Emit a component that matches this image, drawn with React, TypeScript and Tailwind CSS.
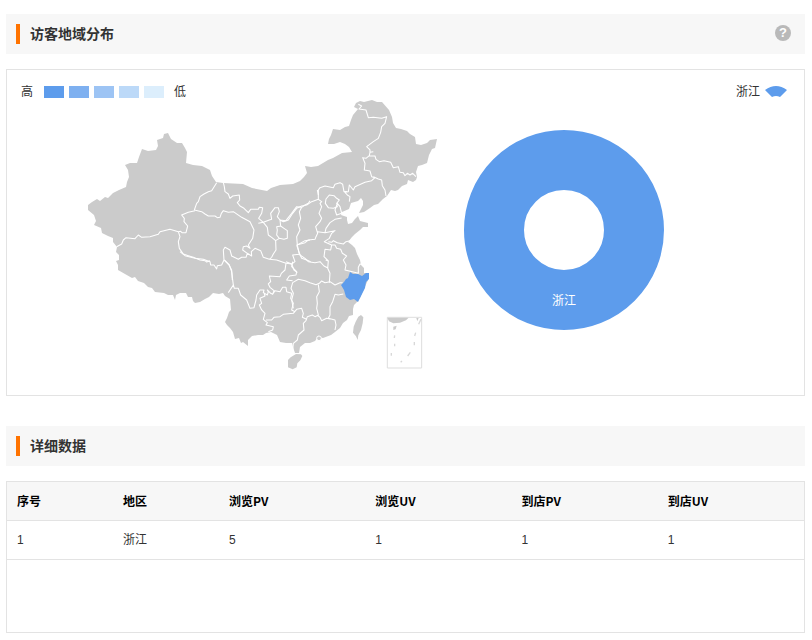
import React from "react";

const mainland =
  "M88 210 88 205 92 202 97 199 100 201 105 197 108 198 113 193 119 190 126 187 127 182 129 177 128 170 125 165 130 163 137 163 139 157 142 149 148 151 156 150 158 146 157 140 163 138 164 134 168 133 171 139 177 143 182 143 185 148 187 152 186 163 193 165 202 166 210 170 212 176 216 182 223 183 243 184 252 188 267 191 271 188 280 185 293 184 300 181 304 177 307 173 305 166 311 167 318 166 328 160 333 158 342 153 352 152 349 147 345 144 340 142 334 144 328 144 329 139 331 135 333 129 340 130 345 127 349 126 351 120 353 115 358 109 354 107 356 103 360 101 364 102 372 100 377 102 382 102 389 110 392 117 393 123 396 128 401 129 407 131 410 134 415 137 416 144 421 145 427 143 430 140 437 139 435 148 432 149 429 155 427 163 422 165 418 166 416 172 417 177 416 180 413 182 408 180 407 184 402 186 398 190 395 191 391 190 387 196 383 199 378 204 374 205 370 208 364 212 359 213 363 205 363 201 361 198 358 201 351 203 349 209 342 212 341 215 347 217 347 220 348 224 352 223 355 219 358 216 360 221 364 222 368 223 368 227 363 227 360 230 355 234 352 237 348 242 352 245 355 248 357 254 360 260 361 265 364 268 364 273 369 273 368 280 363 291 360 298 357 302 354 305 353 309 353 315 349 316 347 320 343 323 340 328 335 332 331 335 323 338 318 337 315 341 310 343 305 343 300 347 299 353 295 353 293 347 292 343 286 343 280 342 277 335 271 332 266 333 263 335 258 335 252 336 248 340 248 346 243 342 241 343 239 338 235 339 233 332 230 328 227 325 225 322 227 318 229 312 231 310 230 299 225 296 223 293 219 294 213 293 209 297 205 299 200 302 195 303 193 301 192 297 188 297 186 293 180 293 176 295 175 300 173 295 168 295 164 293 155 292 152 288 148 287 144 283 138 281 135 277 132 278 125 274 118 270 118 265 116 261 119 260 119 255 116 252 117 247 113 242 113 238 108 236 102 233 101 228 94 225 96 221 94 215Z";

// Province borders, digitised sheet by sheet at three units to the pixel.
const sheets = [
  {
    at: "translate(80 200) scale(.3333)",
    d: "M110 140 125 132 130 120 138 113 165 116 175 105 185 112 210 110 235 103 240 95 270 88 295 95 302 94 306 98 318 98 323 78 312 65 313 55 305 45 325 37 345 32 M295 95 300 110 295 125 298 145 310 162 325 167 340 172 360 180 375 182 380 186 390 182",
  },
  {
    at: "translate(180 170) scale(.3333)",
    d: "M43 120 50 100 55 95 60 80 72 72 85 65 95 62 110 38 M130 38 133 50 135 65 145 72 150 85 158 78 178 75 179 90 172 98 180 108 192 115 205 128 212 118 235 118 238 112 248 113 245 130 236 145 250 157 M235 160 250 157 268 150 275 148 272 130 285 113 295 113 298 125 292 140 300 150 318 152 323 145 335 130 350 110 365 112 375 105 385 100 390 92 M300 150 302 168 290 170 292 180 290 195 298 205 312 208 322 205 322 182 312 175 302 168 M250 157 262 172 265 195 275 202 287 212 298 205 M287 212 288 240 280 252 275 262 M43 120 65 125 75 132 85 138 105 138 112 143 120 142 124 130 130 122 145 127 160 125 185 142 210 155 222 180 218 205 205 225 210 235 200 228 190 230 188 240 202 250 198 262 185 262 175 268 155 258 150 240 135 232 130 240 132 270 125 285 112 287 110 297 102 285 92 285 90 275 70 268 45 265 15 257 0 245 M202 250 215 258 214 245 225 235 242 242 250 262 268 268 275 262 M268 268 290 270 318 280 335 282 345 275 338 255 358 253 352 225 350 200 360 180 355 165 362 145 358 125 365 112 M352 225 375 212 390 210 M358 250 365 265 380 270 392 275 M132 270 147 285 155 300 157 330",
  },
  {
    at: "translate(180 260) scale(.3333)",
    d: "M133 0 148 15 155 35 160 75 145 98 M160 75 163 85 175 85 182 105 200 120 210 145 222 143 228 120 230 105 240 90 252 90 250 98 262 105 265 95 262 90 272 100 278 103 282 92 270 82 265 72 272 65 268 48 300 50 304 40 315 30 318 10 M318 5 335 12 342 30 352 38 M252 98 255 108 240 115 245 130 238 135 245 150 255 160 250 178 262 188 258 195 280 200 278 210 265 215 M278 103 285 92 300 95 308 82 318 82 320 95 335 100 332 115 340 130 335 150 345 155 M258 180 275 180 282 172 300 170 310 163 340 160 350 148 365 145 370 160 367 172 380 178",
  },
  {
    at: "translate(290 95) scale(.3333)",
    d: "M205 28 215 33 207 42 228 45 235 68 250 67 275 70 290 65 285 85 275 95 272 112 265 130 250 140 230 155 240 165 240 172 250 170 M240 172 238 182 255 183 258 193 268 200 282 197 302 202 310 218 325 215 330 232 340 233 345 242 352 235 360 240 368 235 378 245 M238 182 228 190 218 188 225 205 223 225 240 228 245 245 255 248 M250 245 265 252 275 255 277 272 285 285 288 303 M255 248 245 257 225 262 195 275 190 285 178 270 175 290 165 292 172 300 180 305 178 320 M172 290 162 290 158 268 150 263 135 268 130 278 105 273 90 278 85 285 85 300 M108 312 118 300 132 302 140 310 148 315 140 325 142 335 130 340 115 338 106 325Z M142 325 150 335 155 355 140 360 135 345Z",
  },
  {
    at: "translate(280 190) scale(.3333)",
    d: "M0 90 10 95 25 90 38 70 50 55 65 48 80 45 95 35 115 28 M50 165 60 195 75 205 85 215 105 218 120 215 132 228 145 235 M50 165 75 158 85 150 105 148 108 140 113 130 107 110 120 95 125 85 117 70 125 50 120 40 125 35 115 28 115 15 112 0 M113 125 135 128 138 115 150 98 165 88 185 84 M135 128 165 122 155 130 148 145 133 155 155 165 M145 155 155 157 160 152 172 158 190 162 198 155 210 152 M155 165 152 180 135 178 132 200 145 213 143 235 150 250 148 278 M155 165 165 165 170 175 182 178 187 190 200 198 190 210 198 225 195 240 220 246 235 250 235 232 240 222 252 225 M145 213 137 210",
  },
  {
    at: "translate(280 260) scale(.3333)",
    d: "M38 62 20 60 28 48 48 45 50 35 35 20 38 5 M38 68 55 58 75 62 90 68 108 74 118 70 125 63 135 68 150 65 165 75 180 68 188 68 M38 68 33 85 40 100 35 120 40 145 M115 74 118 95 110 110 112 130 110 145 115 165 105 170 97 165 82 170 78 182 70 190 72 210 55 225 52 240 40 250 38 270 M190 102 175 105 165 103 158 125 150 140 150 165 145 175 165 180 168 195 165 210 M112 165 120 172 125 182 140 175 150 177",
  },
];

function ChinaMap() {
  return (
    <svg
      className="h-[280px] w-[352px] shrink-0 overflow-visible"
      viewBox="87 100 352 280"
      role="img"
      aria-label="访客地域分布地图"
    >
      <path d={mainland} fill="#cbcbcb" />
      {sheets.map((s) => (
        <path
          key={s.at}
          d={s.d}
          transform={s.at}
          fill="none"
          stroke="#fff"
          strokeWidth="3.2"
          strokeLinejoin="round"
        />
      ))}
      <path
        d="M350 272 353 274 358 274 362 276 366 273 369 273 369 279 366 282 365 288 363 292 360 298 358 302 354 299 350 300 346 297 344 290 341 285 344 282 346 279 348 278Z"
        fill="#5d9cec"
      />
      <g transform="translate(280 260) scale(.3333)" fill="#cbcbcb">
        <path d="M235 170 243 165 250 172 248 190 243 210 235 226 233 240 228 229 219 218 221 200 227 185Z" />
        <path d="M32 292 48 282 63 283 67 288 61 301 52 310 50 322 38 328 24 322 24 300Z" />
        <circle cx="117" cy="235" r="7" stroke="#fff" strokeWidth="3" />
        <path d="M322 172H425V324H322Z" fill="none" stroke="#dedede" strokeWidth="3" />
        <path d="M322 173H386L378 181 360 188 340 190 327 184Z" />
        <path d="M409 174H416L412 184Z" />
        <path d="M340 200 350 197 347 208 340 210Z" />
        <path
          d="M423 178 416 193M407 218 404 228M403 246V256M391 277 383 288M366 303 362 307M334 279V287M344 251V259M344 226 343 234"
          fill="none"
          stroke="#d8d8d8"
          strokeWidth="4"
        />
      </g>
    </svg>
  );
}

function Donut() {
  return (
    <svg className="mt-[30px] size-[200px] shrink-0" viewBox="0 0 200 200" role="img" aria-label="浙江">
      <circle cx="100" cy="100" r="70" fill="none" stroke="#5d9cec" strokeWidth="60" />
      <text x="100" y="175" textAnchor="middle" fontSize="12" fill="#fff">
        浙江
      </text>
    </svg>
  );
}

function SectionTitle({ title, help }: { title: string; help?: boolean }) {
  return (
    <header className="flex h-10 items-center bg-[#f7f7f7] pr-3.5 pl-2.5">
      <span className="h-5 w-1 bg-[#ff7300]" />
      <h2 className="ml-2.5 flex-1 text-[14px] leading-5 font-bold text-[#333]">{title}</h2>
      {help && (
        <button
          type="button"
          aria-label="帮助"
          className="mb-0.5 flex size-4 items-center justify-center rounded-full bg-[#b9b9b9] font-['Liberation_Sans',sans-serif] text-[13px] leading-4 font-bold text-white"
        >
          ?
        </button>
      )}
    </header>
  );
}

const columns = ["序号", "地区", "浏览PV", "浏览UV", "到店PV", "到店UV"];
const rows = [["1", "浙江", "5", "1", "1", "1"]];

export default function App() {
  return (
    <main className="bg-white pt-3.5 pr-[7px] pb-2 pl-1.5 font-['Liberation_Sans','Noto_Sans_CJK_SC',sans-serif] text-[12px] text-[#333]">
      <section>
        <SectionTitle title="访客地域分布" help />
        <div className="mt-[15px] border border-[#e3e3e3] pb-[15px]">
          <div className="flex items-center justify-between pt-3.5 pr-4 pl-3.5 leading-4">
            <div className="flex items-center gap-[5px]">
              <span className="mr-1.5">高</span>
              <span className="h-3 w-5 bg-[#5d9cec]" />
              <span className="h-3 w-5 bg-[#7eb0f0]" />
              <span className="h-3 w-5 bg-[#9dc4f4]" />
              <span className="h-3 w-5 bg-[#bcd9f8]" />
              <span className="h-3 w-5 bg-[#dceefc]" />
              <span className="ml-[5px]">低</span>
            </div>
            <div className="flex items-center gap-1">
              <span>浙江</span>
              <svg className="h-3.5 w-6" viewBox="0 0 24 14" aria-hidden="true">
                <path d="M1 5Q12-3 23 5L16 12Q12 10 8 12Z" fill="#5d9cec" />
              </svg>
            </div>
          </div>
          <div className="flex items-start gap-[25px] pl-20">
            <ChinaMap />
            <Donut />
          </div>
        </div>
      </section>

      <section className="mt-[30px]">
        <SectionTitle title="详细数据" />
        <div className="mt-[15px] min-h-[152px] border border-[#e3e3e3]">
          <table className="w-full table-fixed border-collapse text-left">
            <thead>
              <tr className="h-[38px] border-b border-[#e3e3e3] bg-[#f7f7f7] text-black">
                {columns.map((c, i) => (
                  <th
                    key={c}
                    scope="col"
                    className={`px-2.5 font-['Noto_Sans_CJK_SC',sans-serif] leading-4 font-bold ${i < 2 ? "w-[106px]" : ""}`}
                  >
                    {c}
                  </th>
                ))}
              </tr>
            </thead>
            <tbody>
              {rows.map((r) => (
                <tr key={r[0]} className="h-[39px] border-b border-[#e3e3e3]">
                  {r.map((v, i) => (
                    <td key={columns[i]} className="px-2.5 leading-4">
                      {v}
                    </td>
                  ))}
                </tr>
              ))}
            </tbody>
          </table>
        </div>
      </section>
    </main>
  );
}
